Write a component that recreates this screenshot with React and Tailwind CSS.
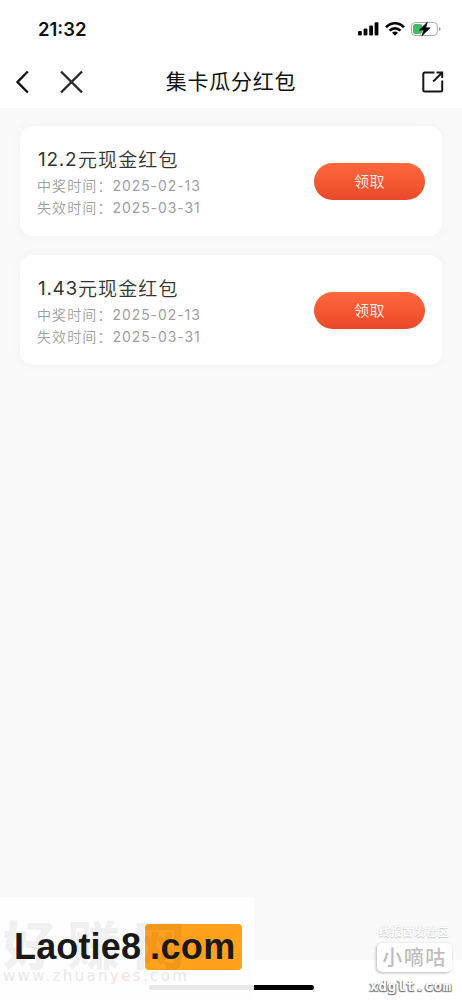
import React from "react";

const prizes = [
  { amount: "12.2", won: "2025-02-13", expires: "2025-03-31" },
  { amount: "1.43", won: "2025-02-13", expires: "2025-03-31" },
];

function StatusBar() {
  return (
    <div className="flex h-[58px] items-center justify-between pr-[21px] pl-[38px]">
      <span className="font-['Inter'] text-[18.5px] leading-[20px] font-semibold text-[#111]">21:32</span>
      <svg width="83" height="16" viewBox="0 0 83 16" fill="none">
        <g fill="#050505">
          <rect x="0" y="10" width="3.8" height="4.6" rx="1" />
          <rect x="5.6" y="7.6" width="3.8" height="7" rx="1" />
          <rect x="11.2" y="4.6" width="3.8" height="10" rx="1" />
          <rect x="16.6" y="1.2" width="3.8" height="13.4" rx="1" />
        </g>
        <g stroke="#050505" strokeWidth="2.7">
          <path d="M28 6.2C33.2 .9 40.8 .9 46 6.2" />
          <path d="M31.5 9.6C34.6 6.5 39.4 6.5 42.5 9.6" />
        </g>
        <path d="M34 11.7Q37 9.3 40 11.7L37 14.7Z" fill="#050505" />
        <rect x="53.5" y="1.5" width="25.8" height="13" rx="3.6" stroke="#aaa" />
        <rect x="55" y="3" width="9" height="10" rx="2" fill="#40bd6b" />
        <path d="M81 6V10Q82.6 9.4 82.6 8T81 6Z" fill="#999" />
        <path d="M69.3 1.2L61.3 9.2H65.6L63.8 15L72.2 6.8H67.8Z" fill="#050505" stroke="#050505" strokeWidth=".6" />
      </svg>
    </div>
  );
}

function NavBar() {
  return (
    <div className="grid h-[50px] grid-cols-[110px_1fr_110px] items-center pb-[2px]">
      <div className="flex items-center pl-[14px]">
        <svg width="16" height="24" viewBox="0 0 16 24" fill="none" stroke="#111" strokeWidth="2.4">
          <path d="M13.8 1.5L3.5 12L13.8 22.5" />
        </svg>
        <svg className="ml-[30px]" width="24" height="24" viewBox="0 0 24 24" fill="none" stroke="#292929" strokeWidth="2.4">
          <path d="M1 1.5L22 22.5M22 1.5L1 22.5" />
        </svg>
      </div>
      <h1 className="pb-[4px] text-center text-[21px] leading-[30px] tracking-[0.75px] whitespace-nowrap text-[#111]">集卡瓜分红包</h1>
      <div className="flex justify-end pr-[18px]">
        <svg width="22" height="22" viewBox="0 0 22 22" fill="none" stroke="#171717" strokeWidth="2">
          <path d="M12.5 1.5H2.8Q1.3 1.5 1.3 3V19Q1.3 20.5 2.8 20.5H18.7Q20.2 20.5 20.2 19V9.5" />
          <path d="M14.5 1.5H20.2V7M20 1.7L11.2 10.5" />
        </svg>
      </div>
    </div>
  );
}

function DateLine({ label, date }) {
  return (
    <p className="flex h-[21.5px] items-center text-[14px] leading-[21px] whitespace-nowrap text-[#a0a0a0]">
      <span className="w-[75.5px] font-[350] tracking-[1.1px]">{label}：</span>
      <span className="font-['Inter'] text-[14px] tracking-[0.92px]">{date}</span>
    </p>
  );
}

function PrizeCard({ prize }) {
  return (
    <article className="flex h-[110px] items-center justify-between rounded-[13px] bg-white pr-[17px] pl-[17px] shadow-[0_0_12px_rgba(0,0,0,0.035)]">
      <div className="pt-[2px]">
        <h2 className="flex h-[28px] items-center pl-[1px] text-[19px] leading-[28px] whitespace-nowrap text-[#343434]">
          <span className="w-[40px] font-['Inter'] text-[19px] tracking-[0.7px]">{prize.amount}</span>
          <span className="pb-[2px] font-[350] tracking-[1.1px]">元现金红包</span>
        </h2>
        <div className="pt-[1px]">
          <DateLine label="中奖时间" date={prize.won} />
          <DateLine label="失效时间" date={prize.expires} />
        </div>
      </div>
      <button className="h-[37px] w-[111px] rounded-full bg-linear-to-b from-[#ff683c] to-[#ea4829] pb-[2px] text-[15px] leading-[35px] font-[350] tracking-[0.6px] text-[#fff3ec]">领取</button>
    </article>
  );
}

function LeftWatermark() {
  return (
    <div className="absolute bottom-0 left-0 h-[103px] w-[254px] overflow-hidden bg-[#fefefe]">
      <div className="absolute top-[71px] left-[3px] font-['DejaVu_Sans'] text-[15px] leading-[16px] tracking-[2.35px] whitespace-nowrap text-[#e8e8e8]">
        www.zhuan<span className="text-[#fbdedb]">yes</span>.com
      </div>
      <div className="absolute top-[27px] left-[145px] h-[46px] w-[97px] rounded-[4px] bg-[#ffa11c]" />
      <div className="absolute top-[21px] left-[3px] text-[52px] leading-[50px] font-black tracking-[13px] whitespace-nowrap text-black/[0.055]">好赚网</div>
      <div className="absolute top-[27px] left-[14px] flex font-['Liberation_Sans'] text-[36px] leading-[46px] font-bold whitespace-nowrap text-[#191919]">
        <span className="w-[136px] tracking-[0.15px]">Laotie8</span>
        <span className="tracking-[0.4px]">.com</span>
      </div>
      <div className="absolute top-[88px] left-[149px] h-[5px] w-[105px] rounded-l-full bg-[#e7e7e7]" />
    </div>
  );
}

function RightWatermark() {
  return (
    <div className="absolute right-[10px] bottom-[6px] flex w-[84px] flex-col items-end whitespace-nowrap">
      <span className="mr-[3px] text-[11px] leading-[14px] font-bold tracking-[0.7px] text-white [text-shadow:0_1px_1px_#ccc,0_0_1px_#ccc]">线报首发社区</span>
      <span className="mt-[5px] h-[29px] w-[75px] rounded-[5px] bg-white text-center text-[20px] leading-[27px] font-medium tracking-[1.5px] text-[#bebebe] shadow-[-1px_1px_3px_#b5b5b5]">小嘀咕</span>
      <span className="mt-[6px] font-['DejaVu_Sans_Mono'] text-[14px] leading-[16px] font-bold tracking-[0.75px] text-white [text-shadow:1px_1px_1px_#777,-1px_1px_1px_#777,0_0_1px_#999]">xdglt.com</span>
    </div>
  );
}

export default function App() {
  return (
    <main className="relative flex h-[1000px] w-[462px] flex-col overflow-hidden bg-white font-['Noto_Sans_CJK_SC',sans-serif]">
      <StatusBar />
      <NavBar />
      <section className="flex h-[852px] flex-col gap-[19px] bg-[#f9f9f9] px-[20px] pt-[18px]">
        {prizes.map((prize) => (
          <PrizeCard key={prize.amount} prize={prize} />
        ))}
      </section>
      <footer className="flex h-[40px] justify-center pt-[25px]">
        <div className="h-[5px] w-[165px] rounded-full bg-black" />
      </footer>
      <LeftWatermark />
      <RightWatermark />
    </main>
  );
}
